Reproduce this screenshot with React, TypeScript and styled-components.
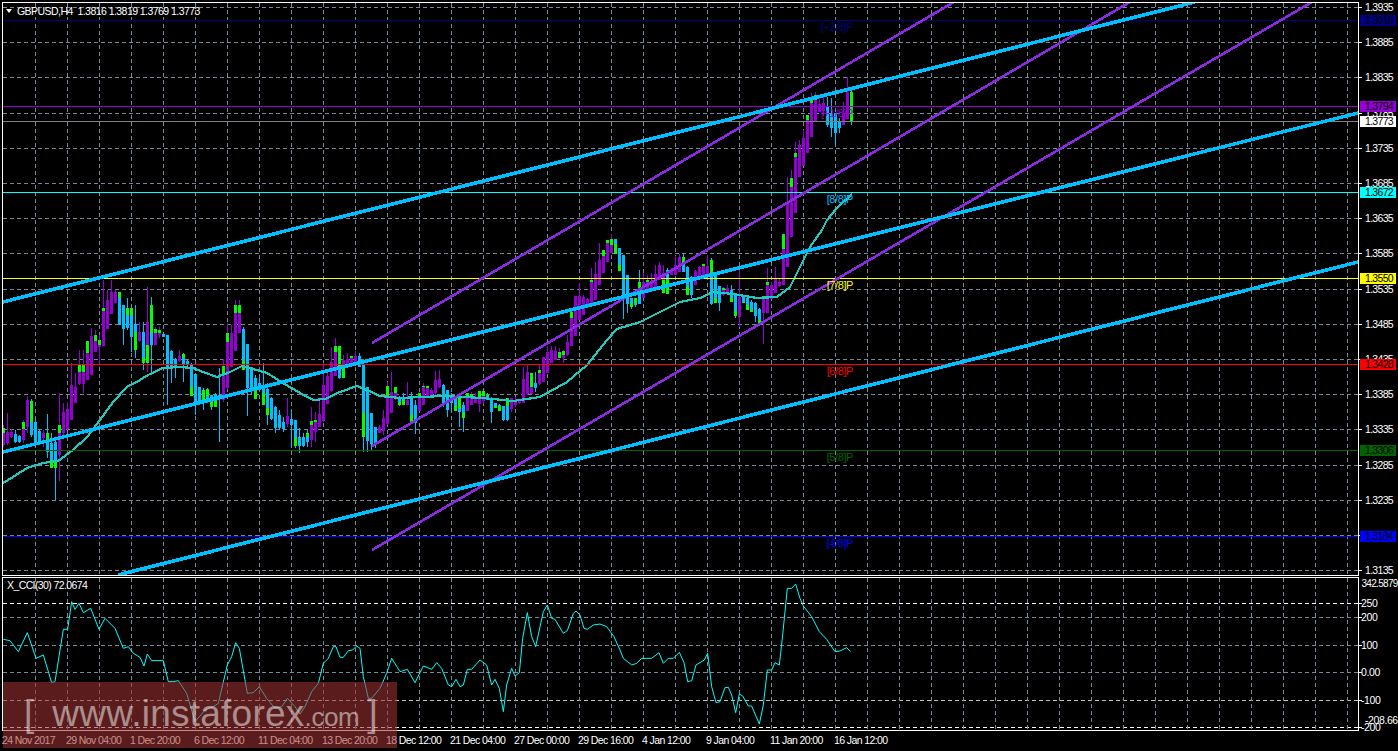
import React from 'react';
import styled, { createGlobalStyle } from 'styled-components';

const GlobalStyle = createGlobalStyle`
  html, body {
    margin: 0;
    padding: 0;
    background: #000000;
  }
`;

const Terminal = styled.div`
  position: relative;
  display: flex;
  flex-direction: column;
  width: 1398px;
  height: 751px;
  padding-top: 2px;
  box-sizing: border-box;
  overflow: hidden;
  background: #000000;
  font-family: 'Liberation Sans', Arial, sans-serif;
  font-size: 10.5px;
  color: #ffffff;
`;

const ChartSvg = styled.svg`
  display: block;
  flex-shrink: 0;
  width: 1398px;
  font-family: 'Liberation Sans', Arial, sans-serif;
  font-size: 10.5px;
`;

const TimeAxis = styled.div`
  display: flex;
  height: 20px;
  padding-left: 2px;
  line-height: 18px;
  white-space: nowrap;
  letter-spacing: -0.6px;
`;

const TimeLabel = styled.span`
  flex: 0 0 64px;
`;

const ChartTitle = styled.div`
  position: absolute;
  left: 6px;
  top: 5px;
  display: flex;
  align-items: center;
  gap: 5px;
  line-height: 12px;
  letter-spacing: -0.55px;
  white-space: pre;
`;

const TitleArrow = styled.i`
  width: 0;
  height: 0;
  border-left: 3.5px solid transparent;
  border-right: 3.5px solid transparent;
  border-top: 4px solid #ffffff;
`;

const IndicatorTitle = styled.div`
  position: absolute;
  left: 7px;
  top: 579px;
  line-height: 12px;
  letter-spacing: -0.6px;
`;

const Watermark = styled.div`
  position: absolute;
  left: 3px;
  top: 682px;
  display: flex;
  align-items: baseline;
  width: 394px;
  height: 66px;
  padding: 12px 0 0 21px;
  box-sizing: border-box;
  background: rgba(160, 50, 50, 0.56);
  color: rgba(255, 255, 255, 0.5);
  font-size: 37px;
  line-height: 40px;
  white-space: pre;
`;

const WatermarkDomain = styled.span`
  margin-left: 18px;
  letter-spacing: 0.25px;
`;

const WatermarkTld = styled.span`
  font-size: 26px;
  letter-spacing: -0.4px;
`;

const WatermarkBracket = styled.span`
  margin-left: 8px;
`;

// [wick top, wick bottom, body top, body bottom, colour, lime top, lime bottom]
type Bar = [number, number, number, number, 'v' | 'b', number?, number?];

const bars: Bar[] = [
  [425, 447, 433, 445, 'v', 428, 433],
  [413, 445, 432, 443, 'v'],
  [429, 438, 432, 437, 'v'],
  [430, 443, 434, 442, 'b'],
  [435, 443, 436, 442, 'b'],
  [420, 443, 429, 440, 'v', 422, 429],
  [396, 433, 400, 427, 'v'],
  [399, 437, 422, 435, 'b', 401, 422],
  [418, 445, 422, 443, 'b'],
  [430, 445, 431, 443, 'b'],
  [430, 447, 433, 438, 'v'],
  [414, 458, 440, 452, 'b', 433, 440],
  [433, 468, 443, 460, 'b', 460, 468],
  [440, 500, 442, 462, 'b', 462, 468],
  [393, 481, 433, 455, 'v', 425, 433],
  [403, 437, 412, 433, 'v'],
  [402, 430, 409, 429, 'v'],
  [363, 420, 385, 420, 'v'],
  [373, 403, 387, 403, 'v'],
  [350, 385, 372, 384, 'v', 365, 372],
  [350, 393, 372, 384, 'v', 365, 372],
  [341, 380, 353, 380, 'v', 341, 353],
  [328, 375, 336, 375, 'v'],
  [330, 352, 341, 352, 'v', 335, 341],
  [335, 365, 345, 347, 'v', 340, 345],
  [280, 346, 311, 346, 'v', 308, 311],
  [290, 329, 300, 329, 'v'],
  [280, 314, 292, 314, 'v'],
  [290, 303, 292, 303, 'v'],
  [292, 325, 298, 325, 'b', 292, 298],
  [305, 345, 305, 329, 'b'],
  [298, 330, 315, 328, 'b', 308, 315],
  [308, 352, 315, 337, 'b', 308, 315],
  [305, 358, 324, 332, 'b', 332, 350],
  [322, 342, 332, 341, 'v'],
  [322, 370, 332, 358, 'b', 358, 363],
  [287, 372, 322, 345, 'v', 345, 363],
  [297, 373, 333, 345, 'b', 305, 333],
  [327, 345, 333, 345, 'v', 329, 333],
  [327, 338, 333, 335, 'v', 330, 333],
  [333, 337, 334, 337, 'b'],
  [335, 405, 335, 368, 'b'],
  [350, 383, 351, 368, 'b'],
  [358, 378, 359, 368, 'b'],
  [350, 362, 356, 361, 'v'],
  [353, 382, 358, 365, 'b', 354, 358],
  [360, 367, 361, 365, 'b'],
  [363, 395, 365, 387, 'b', 387, 396],
  [373, 415, 374, 402, 'b'],
  [387, 402, 387, 402, 'b'],
  [388, 410, 390, 402, 'b', 390, 400],
  [388, 400, 396, 400, 'b', 389, 396],
  [395, 410, 395, 402, 'b', 402, 407],
  [393, 407, 394, 397, 'b', 397, 407],
  [368, 442, 395, 398, 'b'],
  [359, 402, 375, 400, 'v', 366, 375],
  [323, 389, 342, 388, 'v', 333, 342],
  [325, 367, 333, 367, 'v'],
  [300, 351, 313, 351, 'v', 305, 313],
  [300, 333, 305, 333, 'v', 305, 313],
  [327, 370, 329, 361, 'b', 361, 370],
  [345, 416, 344, 388, 'b'],
  [367, 395, 367, 389, 'b'],
  [375, 399, 378, 390, 'b', 390, 399],
  [377, 390, 383, 390, 'b'],
  [363, 405, 385, 393, 'b', 393, 405],
  [383, 425, 389, 408, 'b', 408, 415],
  [397, 420, 398, 419, 'b'],
  [406, 433, 407, 428, 'b'],
  [410, 430, 415, 428, 'b'],
  [417, 432, 422, 429, 'b'],
  [398, 427, 416, 424, 'v'],
  [410, 448, 419, 425, 'b'],
  [420, 448, 420, 438, 'b', 438, 446],
  [428, 453, 437, 446, 'b'],
  [433, 447, 437, 446, 'b'],
  [430, 447, 437, 442, 'b', 433, 437],
  [407, 447, 425, 440, 'v', 421, 425],
  [412, 442, 422, 432, 'v', 420, 422],
  [400, 427, 414, 427, 'v'],
  [363, 422, 385, 421, 'v'],
  [370, 404, 376, 404, 'v'],
  [347, 392, 362, 391, 'v'],
  [338, 376, 352, 376, 'v', 346, 352],
  [346, 379, 366, 378, 'b', 346, 366],
  [355, 378, 360, 366, 'v', 366, 378],
  [353, 363, 359, 365, 'v'],
  [357, 365, 358, 363, 'v', 356, 358],
  [351, 363, 356, 363, 'v'],
  [353, 367, 356, 367, 'b'],
  [365, 452, 365, 413, 'b', 413, 437],
  [387, 452, 387, 441, 'b'],
  [413, 450, 413, 444, 'b'],
  [427, 448, 427, 443, 'b'],
  [425, 433, 427, 433, 'v'],
  [410, 435, 418, 431, 'v'],
  [382, 425, 398, 424, 'v', 386, 398],
  [372, 413, 392, 413, 'v'],
  [387, 400, 393, 399, 'v', 387, 393],
  [396, 406, 398, 402, 'b', 402, 405],
  [393, 405, 398, 400, 'b', 400, 405],
  [382, 405, 400, 405, 'v'],
  [392, 423, 398, 415, 'b', 415, 423],
  [400, 434, 405, 423, 'b'],
  [393, 411, 398, 411, 'v', 393, 398],
  [383, 405, 387, 405, 'v', 386, 387],
  [386, 397, 388, 396, 'v', 386, 388],
  [388, 396, 390, 395, 'v'],
  [371, 395, 380, 393, 'v'],
  [370, 388, 379, 387, 'v'],
  [384, 407, 385, 403, 'b'],
  [390, 417, 390, 410, 'b'],
  [393, 412, 395, 403, 'b'],
  [396, 411, 398, 406, 'b', 406, 411],
  [396, 427, 408, 412, 'b', 398, 408],
  [402, 432, 405, 413, 'b', 413, 418],
  [393, 411, 398, 411, 'v', 393, 398],
  [392, 405, 398, 405, 'v', 394, 398],
  [393, 403, 397, 403, 'v'],
  [391, 412, 397, 404, 'v', 391, 397],
  [391, 404, 396, 401, 'v', 391, 396],
  [393, 400, 396, 400, 'b', 395, 396],
  [397, 423, 400, 412, 'b'],
  [403, 408, 403, 406, 'b', 406, 408],
  [404, 411, 405, 406, 'b', 406, 411],
  [406, 421, 406, 420, 'b'],
  [398, 421, 406, 420, 'b', 398, 406],
  [398, 412, 398, 409, 'v'],
  [397, 407, 400, 405, 'v'],
  [399, 404, 400, 403, 'v'],
  [367, 403, 379, 403, 'v'],
  [364, 395, 372, 394, 'v'],
  [373, 394, 387, 394, 'v', 373, 387],
  [372, 392, 383, 388, 'b'],
  [364, 385, 373, 384, 'v', 370, 373],
  [357, 382, 357, 382, 'v'],
  [346, 373, 352, 373, 'v'],
  [346, 363, 350, 363, 'v'],
  [346, 360, 351, 360, 'v'],
  [348, 358, 352, 358, 'v', 352, 358],
  [350, 363, 355, 358, 'v', 351, 355],
  [335, 356, 342, 355, 'v'],
  [312, 346, 318, 346, 'v', 312, 318],
  [296, 336, 296, 336, 'v'],
  [283, 320, 296, 320, 'v'],
  [295, 315, 297, 315, 'v'],
  [298, 304, 299, 304, 'v'],
  [268, 304, 282, 304, 'v', 280, 282],
  [262, 300, 274, 300, 'v'],
  [243, 285, 260, 285, 'v'],
  [250, 273, 256, 273, 'v', 250, 256],
  [240, 262, 243, 262, 'v', 240, 243],
  [234, 253, 245, 253, 'v', 239, 245],
  [239, 254, 239, 244, 'b', 244, 254],
  [248, 271, 248, 265, 'b', 265, 271],
  [255, 319, 255, 298, 'b'],
  [275, 313, 275, 304, 'b'],
  [298, 309, 298, 303, 'b', 303, 307],
  [298, 307, 303, 305, 'b', 298, 303],
  [270, 304, 294, 304, 'b', 282, 294],
  [273, 298, 282, 298, 'v'],
  [275, 293, 282, 293, 'v', 280, 282],
  [273, 290, 281, 290, 'v'],
  [265, 287, 274, 287, 'v'],
  [262, 280, 265, 280, 'v'],
  [265, 293, 273, 280, 'v', 280, 293],
  [268, 294, 270, 280, 'b', 280, 294],
  [268, 275, 269, 275, 'v'],
  [256, 275, 265, 275, 'v'],
  [254, 272, 257, 272, 'v'],
  [253, 272, 263, 272, 'b', 257, 263],
  [266, 295, 267, 287, 'b', 287, 295],
  [276, 298, 277, 295, 'b'],
  [270, 285, 271, 285, 'v'],
  [266, 277, 267, 277, 'v'],
  [264, 276, 266, 275, 'v', 264, 266],
  [255, 275, 266, 275, 'v'],
  [258, 305, 273, 304, 'b', 260, 273],
  [273, 303, 273, 298, 'b', 298, 303],
  [286, 311, 286, 303, 'b'],
  [287, 296, 290, 295, 'v', 288, 290],
  [285, 294, 288, 293, 'v'],
  [285, 302, 290, 298, 'b', 298, 302],
  [293, 318, 294, 311, 'b', 311, 316],
  [270, 327, 297, 317, 'v', 317, 317],
  [296, 303, 296, 302, 'b', 302, 303],
  [297, 310, 298, 305, 'b', 305, 310],
  [300, 312, 302, 310, 'b', 310, 312],
  [302, 322, 303, 316, 'b'],
  [308, 323, 309, 320, 'b', 320, 323],
  [296, 344, 297, 313, 'v', 296, 297],
  [268, 313, 285, 313, 'v', 282, 285],
  [282, 299, 285, 299, 'v'],
  [267, 293, 279, 293, 'v'],
  [278, 287, 282, 286, 'v'],
  [234, 285, 249, 285, 'v', 234, 249],
  [177, 267, 203, 267, 'v'],
  [170, 237, 187, 237, 'v', 178, 187],
  [142, 213, 157, 213, 'v', 153, 157],
  [140, 177, 145, 177, 'v'],
  [130, 166, 138, 166, 'v'],
  [117, 153, 120, 153, 'v', 115, 120],
  [93, 137, 103, 137, 'v', 100, 103],
  [92, 122, 100, 122, 'v', 95, 100],
  [96, 112, 104, 112, 'v'],
  [97, 116, 103, 111, 'v'],
  [97, 127, 107, 125, 'b'],
  [98, 137, 113, 128, 'b'],
  [113, 145, 113, 133, 'b'],
  [118, 133, 121, 128, 'b'],
  [102, 125, 113, 125, 'v'],
  [77, 119, 92, 119, 'v'],
  [90, 125, 119, 122, 'b', 92, 122],
];

const emaPoints = [
  [3, 483], [13, 477], [27, 468], [43, 463], [58, 461], [73, 450], [87, 437], [100, 420], [113, 402],
  [127, 387], [140, 380], [148, 375], [163, 368], [180, 367], [193, 368], [203, 372], [217, 377],
  [230, 372], [242, 366], [253, 369], [267, 373], [283, 383], [300, 393], [313, 400], [325, 399],
  [340, 392], [357, 386], [367, 390], [380, 396], [400, 398], [443, 396], [483, 398], [513, 401],
  [540, 397], [567, 382], [587, 365], [607, 340], [617, 329], [640, 322], [660, 312], [680, 302],
  [700, 298], [713, 292], [733, 294], [757, 298], [777, 297], [790, 287], [800, 267], [810, 247],
  [822, 230], [827, 220], [837, 208], [852, 194],
];

// traced at 3x: x / 3, 570 + y / 3
const cciTrace = [
  [10, 208], [30, 212], [55, 245], [82, 188], [108, 265], [130, 255], [155, 338], [165, 335], [190, 178],
  [203, 178], [215, 95], [225, 118], [237, 100], [250, 128], [272, 115], [297, 178], [315, 145], [345, 175],
  [370, 235], [385, 230], [400, 250], [420, 262], [432, 288], [442, 252], [455, 272], [490, 272], [505, 335],
  [520, 335], [535, 332], [560, 370], [585, 455], [615, 420], [640, 410], [655, 400], [682, 285], [695, 260],
  [707, 218], [718, 235], [742, 370], [760, 368], [778, 350], [800, 385], [825, 415], [845, 410], [862, 385],
  [885, 410], [900, 432], [915, 410], [935, 365], [955, 340], [970, 280], [985, 265], [1000, 230], [1008, 230],
  [1020, 262], [1030, 262], [1045, 242], [1058, 240], [1070, 228], [1080, 235], [1090, 320], [1105, 385],
  [1115, 385], [1140, 355], [1160, 310], [1175, 265], [1200, 305], [1222, 298], [1245, 338], [1270, 288],
  [1295, 298], [1310, 278], [1325, 295], [1345, 345], [1355, 350], [1368, 328], [1380, 350], [1390, 345],
  [1402, 298], [1415, 298], [1440, 270], [1460, 285], [1475, 345], [1485, 328], [1498, 355], [1510, 425],
  [1520, 345], [1535, 295], [1545, 318], [1558, 308], [1568, 205], [1582, 128], [1595, 200], [1607, 230],
  [1630, 125], [1642, 105], [1655, 145], [1665, 148], [1690, 190], [1702, 182], [1720, 130], [1728, 123],
  [1740, 135], [1752, 175], [1762, 178], [1780, 165], [1800, 162], [1820, 170], [1842, 200], [1860, 240],
  [1870, 265], [1895, 285], [1910, 280], [1925, 265], [1955, 265], [1977, 248], [1990, 280], [2005, 265],
  [2020, 265], [2038, 247], [2052, 278], [2063, 335], [2075, 332], [2088, 285], [2113, 270], [2123, 250],
  [2135, 350], [2148, 398], [2160, 395], [2175, 353], [2185, 352], [2195, 375], [2207, 428], [2218, 372],
  [2228, 378], [2245, 408], [2255, 408], [2278, 462], [2290, 405], [2302, 300], [2315, 300], [2325, 278],
  [2338, 285], [2348, 195], [2362, 55], [2375, 55], [2387, 42], [2400, 85], [2410, 108], [2435, 140],
  [2458, 185], [2480, 208], [2505, 245], [2520, 243], [2540, 233], [2552, 245],
];

const levels = [
  { y: 20, color: '#000080', price: '1.3916', label: '[+2/8]P', labelColor: '#000080' },
  { y: 106, color: '#9400d3', price: '1.3794', label: '[+1/8]P', labelColor: '#9400d3' },
  { y: 192, color: '#00ffff', price: '1.3672', label: '[8/8]P', labelColor: '#00bfff' },
  { y: 278, color: '#ffff00', price: '1.3550', label: '[7/8]P', labelColor: '#ffff00' },
  { y: 364, color: '#ff0000', price: '1.3428', label: '[6/8]P', labelColor: '#ff0000' },
  { y: 450, color: '#006400', price: '1.3306', label: '[5/8]P', labelColor: '#006400' },
  { y: 536, color: '#0000ff', price: '1.3184', label: '[4/8]P', labelColor: '#0000ff' },
];

const blueLines = [
  [3, 302, 1195, 2],
  [3, 452, 1358, 113],
  [118, 575, 1358, 262],
];

const violetLines = [
  [372, 343, 954, 2],
  [372, 446, 1130, 2],
  [372, 550, 1312, 2],
];

const priceTicks = Array.from({ length: 17 }, (_, i) => ({
  y: Math.round(7 + i * 35.2),
  price: (1.3935 - i * 0.005).toFixed(4),
}));

const cciTicks = [
  { y: 603, label: '250', color: '#ffffff' },
  { y: 617, label: '200', color: '#778899' },
  { y: 645, label: '100', color: '#778899' },
  { y: 672, label: '0.00', color: '#778899' },
  { y: 700, label: '-100', color: '#c0c0c0' },
  { y: 727, label: '-200', color: '#ffffff' },
];

const timeLabels = [
  '24 Nov 2017', '29 Nov 04:00', '1 Dec 20:00', '6 Dec 12:00', '11 Dec 04:00', '13 Dec 20:00', '18 Dec 12:00',
  '21 Dec 04:00', '27 Dec 00:00', '29 Dec 16:00', '4 Jan 12:00', '9 Jan 04:00', '11 Jan 20:00', '16 Jan 12:00',
];

const gridX = Array.from({ length: 42 }, (_, i) => 35.5 + i * 32);
const barColor = { v: '#9400d3', b: '#00bfff' };

const VerticalGrid: React.FC<{ top: number; bottom: number }> = ({ top, bottom }) => (
  <g stroke="#778899" strokeDasharray="4 3" shapeRendering="crispEdges">
    {gridX.map((x) => (
      <line key={x} x1={x} x2={x} y1={top} y2={bottom} />
    ))}
  </g>
);

const Candles: React.FC = () => (
  <g shapeRendering="crispEdges">
    {bars.map(([wickTop, wickBottom, bodyTop, bodyBottom, kind, limeTop, limeBottom], i) => (
      <g key={i} fill={barColor[kind]}>
        <rect x={3 + i * 4} y={wickTop} width={1} height={wickBottom - wickTop} />
        <rect x={2 + i * 4} y={bodyTop} width={3} height={Math.max(bodyBottom - bodyTop, 1)} />
        {limeTop !== undefined && limeBottom !== undefined && (
          <rect x={2 + i * 4} y={limeTop} width={3} height={limeBottom - limeTop} fill="#00ff00" />
        )}
      </g>
    ))}
  </g>
);

const PriceChart: React.FC = () => (
  <ChartSvg viewBox="0 2 1398 574" height={574}>
    <defs>
      <clipPath id="plot">
        <rect x={3} y={3} width={1355} height={572} />
      </clipPath>
    </defs>
    <g clipPath="url(#plot)">
      <g stroke="#778899" strokeDasharray="4 3" shapeRendering="crispEdges">
        {priceTicks.map((t) => (
          <line key={t.price} x1={3} x2={1358} y1={t.y + 0.5} y2={t.y + 0.5} />
        ))}
      </g>
      <VerticalGrid top={3} bottom={575} />
      <Candles />
      <polyline
        points={emaPoints.map((p) => p.join(',')).join(' ')}
        fill="none"
        stroke="#20c8c0"
        strokeWidth={2.2}
        shapeRendering="crispEdges"
      />
      <line x1={3} x2={1358} y1={121.5} y2={121.5} stroke="#808080" shapeRendering="crispEdges" />
      {levels.map((l) => (
        <line key={l.y} x1={3} x2={1358} y1={l.y + 0.5} y2={l.y + 0.5} stroke={l.color} shapeRendering="crispEdges" />
      ))}
      <g shapeRendering="crispEdges">
        {violetLines.map((l) => (
          <line key={l[0] + l[1]} x1={l[0]} y1={l[1]} x2={l[2]} y2={l[3]} stroke="#8a2be2" strokeWidth={2.6} />
        ))}
        {blueLines.map((l) => (
          <line key={l[1]} x1={l[0]} y1={l[1]} x2={l[2]} y2={l[3]} stroke="#00bfff" strokeWidth={3.6} />
        ))}
      </g>
      <g fontSize={11} letterSpacing={-0.4}>
        {levels.map((l) => (
          <text key={l.label} x={853} y={l.y + 11} textAnchor="end" fill={l.labelColor}>
            {l.label}
          </text>
        ))}
      </g>
    </g>
    <g stroke="#ffffff" shapeRendering="crispEdges">
      <line x1={2.5} x2={2.5} y1={2} y2={576} />
      <line x1={2} x2={1359} y1={2.5} y2={2.5} />
      <line x1={2} x2={1359} y1={575.5} y2={575.5} />
      <line x1={1358.5} x2={1358.5} y1={2} y2={576} />
      {priceTicks.map((t) => (
        <line key={t.price} x1={1359} x2={1362} y1={t.y + 0.5} y2={t.y + 0.5} />
      ))}
    </g>
    <g fill="#ffffff" letterSpacing={-0.7}>
      {priceTicks.map((t) => (
        <text key={t.price} x={1365} y={t.y + 4}>
          {t.price}
        </text>
      ))}
    </g>
    <g letterSpacing={-0.7} shapeRendering="crispEdges">
      {levels.map((l) => (
        <React.Fragment key={l.price}>
          <rect x={1360} y={l.y - 5} width={36} height={11} fill={l.color} />
          <text x={1365} y={l.y + 4} fill="#000000">
            {l.price}
          </text>
        </React.Fragment>
      ))}
      <rect x={1360} y={116} width={36} height={11} fill="#ffffff" />
      <text x={1365} y={125} fill="#000000">
        1.3773
      </text>
    </g>
  </ChartSvg>
);

const CciChart: React.FC = () => (
  <ChartSvg viewBox="0 576 1398 155" height={155}>
    <defs>
      <clipPath id="sub">
        <rect x={3} y={578} width={1355} height={152} />
      </clipPath>
    </defs>
    <g clipPath="url(#sub)">
      <g strokeDasharray="4 3" shapeRendering="crispEdges">
        {cciTicks.map((t) => (
          <line key={t.y} x1={3} x2={1358} y1={t.y + 0.5} y2={t.y + 0.5} stroke={t.color} />
        ))}
      </g>
      <VerticalGrid top={578} bottom={730} />
      <polyline
        points={cciTrace.map(([x, y]) => `${x / 3},${570 + y / 3}`).join(' ')}
        fill="none"
        stroke="#00ffff"
        strokeWidth={1}
      />
    </g>
    <g stroke="#ffffff" shapeRendering="crispEdges">
      <line x1={2.5} x2={2.5} y1={577} y2={730.5} />
      <line x1={2} x2={1359} y1={577.5} y2={577.5} />
      <line x1={2} x2={1359} y1={730.5} y2={730.5} />
      <line x1={1358.5} x2={1358.5} y1={577} y2={731} />
      {cciTicks.map((t) => (
        <line key={t.y} x1={1359} x2={1362} y1={t.y + 0.5} y2={t.y + 0.5} />
      ))}
    </g>
    <g fill="#ffffff" letterSpacing={-0.4}>
      <text x={1361.5} y={587} fontSize={10} letterSpacing={-0.7}>342.5879</text>
      <text x={1365} y={724}>-208.662</text>
      {cciTicks.map((t) => (
        <text key={t.y} x={1361} y={t.y + 4}>
          {t.label}
        </text>
      ))}
    </g>
  </ChartSvg>
);

export default function App() {
  return (
    <Terminal>
      <GlobalStyle />
      <PriceChart />
      <CciChart />
      <TimeAxis>
        {timeLabels.map((label) => (
          <TimeLabel key={label}>{label}</TimeLabel>
        ))}
      </TimeAxis>
      <ChartTitle>
        <TitleArrow />
        <span>GBPUSD,H4  1.3816 1.3819 1.3769 1.3773</span>
      </ChartTitle>
      <IndicatorTitle>X_CCI(30) 72.0674</IndicatorTitle>
      <Watermark>
        <span>[</span>
        <WatermarkDomain>www.instaforex</WatermarkDomain>
        <WatermarkTld>.com</WatermarkTld>
        <WatermarkBracket>]</WatermarkBracket>
      </Watermark>
    </Terminal>
  );
}
